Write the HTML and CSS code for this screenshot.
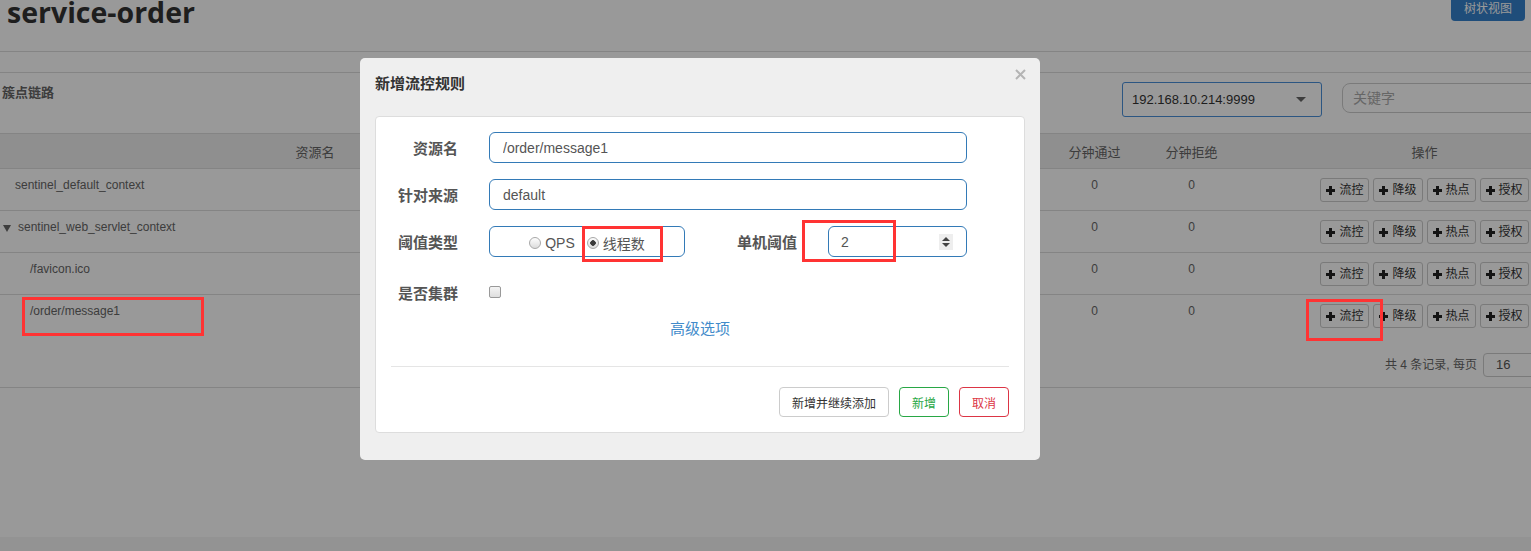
FILE: index.html
```html
<!DOCTYPE html>
<html>
<head>
    <meta charset="utf-8">
    <meta name="viewport" content="width=device-width, initial-scale=1">
    <title>service-order</title>
    <link rel="stylesheet" href="styles.css">
</head>
<body>
    <div class="page">
        <div class="page-head">
            <h1 class="app-title">service-order</h1>
            <button class="btn-tree">树状视图</button>
        </div>
        <div class="sub-bar"></div>
        <div class="toolbar">
            <span class="toolbar-title">簇点链路</span>
            <div class="toolbar-right">
                <div class="machine-select">
                    <span>192.168.10.214:9999</span>
                    <span class="caret"></span>
                </div>
                <input class="search-input" type="text" placeholder="关键字">
            </div>
        </div>
        <table class="res-table">
            <colgroup>
                <col style="width: 630px">
                <col style="width: 104px">
                <col style="width: 104px">
                <col style="width: 104px">
                <col style="width: 104px">
                <col style="width: 97px">
                <col style="width: 97px">
                <col style="width: 291px">
            </colgroup>
            <thead>
                <tr>
                    <th>资源名</th>
                    <th>通过QPS</th>
                    <th>拒绝QPS</th>
                    <th>并发数</th>
                    <th>平均RT</th>
                    <th>分钟通过</th>
                    <th>分钟拒绝</th>
                    <th class="col-ops">操作</th>
                </tr>
            </thead>
            <tbody>
                <tr>
                    <td class="res-name lvl-0">sentinel_default_context</td>
                    <td>0</td><td>0</td><td>0</td><td>0</td>
                    <td>0</td><td>0</td>
                    <td class="col-ops">
                        <button class="op-btn"><span class="plus"></span>流控</button><button class="op-btn"><span class="plus"></span>降级</button><button class="op-btn"><span class="plus"></span>热点</button><button class="op-btn"><span class="plus"></span>授权</button>
                    </td>
                </tr>
                <tr>
                    <td class="res-name lvl-tree"><span class="tree-caret"></span>sentinel_web_servlet_context</td>
                    <td>0</td><td>0</td><td>0</td><td>0</td>
                    <td>0</td><td>0</td>
                    <td class="col-ops">
                        <button class="op-btn"><span class="plus"></span>流控</button><button class="op-btn"><span class="plus"></span>降级</button><button class="op-btn"><span class="plus"></span>热点</button><button class="op-btn"><span class="plus"></span>授权</button>
                    </td>
                </tr>
                <tr>
                    <td class="res-name lvl-1">/favicon.ico</td>
                    <td>0</td><td>0</td><td>0</td><td>0</td>
                    <td>0</td><td>0</td>
                    <td class="col-ops">
                        <button class="op-btn"><span class="plus"></span>流控</button><button class="op-btn"><span class="plus"></span>降级</button><button class="op-btn"><span class="plus"></span>热点</button><button class="op-btn"><span class="plus"></span>授权</button>
                    </td>
                </tr>
                <tr>
                    <td class="res-name lvl-1 marked">/order/message1<span class="mark mark-res"></span></td>
                    <td>0</td><td>0</td><td>0</td><td>0</td>
                    <td>0</td><td>0</td>
                    <td class="col-ops">
                        <button class="op-btn"><span class="plus"></span>流控<span class="mark mark-op"></span></button><button class="op-btn"><span class="plus"></span>降级</button><button class="op-btn"><span class="plus"></span>热点</button><button class="op-btn"><span class="plus"></span>授权</button>
                    </td>
                </tr>
            </tbody>
        </table>
        <div class="pager">
            <span class="pager-text">共 4 条记录, 每页</span>
            <input class="page-size" type="text" value="16">
        </div>
    </div>
    <div class="page-foot"></div>

    <div class="mask"></div>

    <div class="dialog">
        <div class="dialog-title">新增流控规则</div>
        <span class="dialog-close" aria-label="关闭">
            <svg width="11" height="11" viewBox="0 0 11 11"><path d="M1 1L10 10M10 1L1 10" stroke="#b4b4b4" stroke-width="2"/></svg>
        </span>
        <div class="dialog-panel">
            <div class="form">
                <div class="form-row">
                    <label class="form-label">资源名</label>
                    <input class="form-input" type="text" value="/order/message1">
                </div>
                <div class="form-row">
                    <label class="form-label">针对来源</label>
                    <input class="form-input" type="text" value="default">
                </div>
                <div class="form-row">
                    <label class="form-label">阈值类型</label>
                    <div class="radio-box">
                        <label class="radio-item"><input type="radio" name="grade">QPS</label>
                        <label class="radio-item"><input type="radio" name="grade" checked>线程数</label>
                        <span class="mark mark-radio"></span>
                    </div>
                    <label class="form-label form-label-wide">单机阈值</label>
                    <div class="num-input">
                        <input type="text" value="2">
                        <span class="spinner"><span class="spin-up"></span><span class="spin-down"></span></span>
                        <span class="mark mark-num"></span>
                    </div>
                </div>
                <div class="form-row form-row-check">
                    <label class="form-label">是否集群</label>
                    <input class="check" type="checkbox">
                </div>
                <a class="adv-link" href="#">高级选项</a>
            </div>
            <div class="dialog-footer">
                <button class="btn btn-default">新增并继续添加</button>
                <button class="btn btn-green">新增</button>
                <button class="btn btn-red">取消</button>
            </div>
        </div>
    </div>
</body>
</html>
```

FILE: styles.css
```css
body {
    margin: 0;
    background: #fff;
    color: #666;
    font-family: "Liberation Sans", "Noto Sans CJK SC", sans-serif;
    font-size: 12px;
    overflow: hidden;
}

.page {
    min-height: 537px;
}

.page-foot {
    height: 40px;
    background: #f5f5f5;
}

/* --- header --- */
.page-head {
    height: 51px;
    border-bottom: 1px solid #ddd;
    display: flex;
    justify-content: space-between;
    align-items: flex-start;
    padding: 0 6px 0 7px;
}

.app-title {
    margin: -3px 0 0 0;
    font-family: "Open Sans", sans-serif;
    font-size: 28.5px;
    line-height: 30px;
    font-weight: bold;
    color: #333;
}

.btn-tree {
    margin-top: -10px;
    height: 31px;
    padding: 0 13px;
    border: none;
    border-radius: 4px;
    background: #3480cb;
    color: #fff;
    font-family: inherit;
    font-size: 12px;
    padding-top: 4px;
}

.sub-bar {
    height: 20px;
    border-bottom: 1px solid #ddd;
}

.toolbar {
    height: 60px;
    border-bottom: 1px solid #ddd;
    display: flex;
    justify-content: space-between;
    align-items: flex-start;
    padding-left: 2px;
}

.toolbar-title {
    margin-top: 11px;
    font-size: 13px;
    line-height: 18px;
    font-weight: bold;
    color: #666;
}

.toolbar-right {
    display: flex;
    align-items: flex-start;
    gap: 20px;
    margin-right: -11px;
    padding-top: 9px;
}

.machine-select {
    width: 200px;
    height: 35px;
    box-sizing: border-box;
    border: 1px solid #4a90d9;
    border-radius: 3px;
    display: flex;
    align-items: center;
    justify-content: space-between;
    padding: 0 15px 0 9px;
    font-size: 13px;
    color: #333;
}

.caret {
    width: 0;
    height: 0;
    border-left: 5px solid transparent;
    border-right: 5px solid transparent;
    border-top: 5px solid #666;
}

.search-input {
    width: 200px;
    height: 30px;
    box-sizing: border-box;
    margin-top: 1px;
    border: 1px solid #ccc;
    border-radius: 8px;
    padding: 0 10px;
    font-family: inherit;
    font-size: 14px;
}

    .search-input::placeholder {
        color: #aaa;
    }

/* --- table --- */
.res-table {
    width: 1531px;
    table-layout: fixed;
    border-collapse: collapse;
}

    .res-table th {
        height: 34px;
        padding: 0;
        background: #eee;
        font-size: 13px;
        font-weight: normal;
        color: #666;
        text-align: center;
    }

    .res-table td {
        height: 42px;
        box-sizing: border-box;
        padding: 7px 0 0 0;
        border-top: 1px solid #ddd;
        vertical-align: top;
        text-align: center;
        line-height: 18px;
        color: #666;
    }

    .res-table .col-ops {
        padding-left: 78px;
    }

    .res-table td.col-ops {
        padding-top: 9px;
        line-height: 0;
    }

    .res-table td.res-name {
        text-align: left;
        position: relative;
    }

.lvl-0 {
    padding-left: 15px !important;
}

.lvl-tree {
    padding-left: 3px !important;
}

.lvl-1 {
    padding-left: 30px !important;
}

.tree-caret {
    display: inline-block;
    width: 0;
    height: 0;
    border-left: 4px solid transparent;
    border-right: 4px solid transparent;
    border-top: 7px solid #666;
    margin-right: 7px;
    vertical-align: -1px;
}

.op-btn {
    position: relative;
    display: inline-flex;
    align-items: center;
    gap: 4px;
    height: 24px;
    padding: 0 5px;
    margin-left: 4px;
    border: 1px solid #ccc;
    border-radius: 3px;
    background: #fff;
    color: #333;
    font-family: inherit;
    font-size: 12px;
    line-height: 1;
    vertical-align: top;
}

    .op-btn:first-child {
        margin-left: 0;
    }

.plus {
    width: 9px;
    height: 9px;
    background:
        linear-gradient(#222, #222) center / 9px 3px no-repeat,
        linear-gradient(#222, #222) center / 3px 9px no-repeat;
}

.pager {
    height: 50px;
    border-bottom: 1px solid #ddd;
    display: flex;
    justify-content: flex-end;
    align-items: flex-start;
    gap: 6px;
    margin-right: -12px;
}

.pager-text {
    margin-top: 19px;
    font-size: 12px;
    line-height: 18px;
    color: #666;
}

.page-size {
    width: 60px;
    height: 24px;
    box-sizing: border-box;
    margin-top: 16px;
    border: 1px solid #ccc;
    border-radius: 4px;
    padding: 0 12px;
    font-family: inherit;
    font-size: 13px;
    color: #555;
}

/* --- red annotation boxes --- */
.mark {
    position: absolute;
    border: 3px solid #ff3333;
    box-sizing: border-box;
    z-index: 30;
    pointer-events: none;
}

.mark-res {
    left: 22px;
    top: 2px;
    width: 182px;
    height: 39px;
}

.mark-op {
    left: -15px;
    top: -6px;
    width: 77px;
    height: 42px;
}

.mark-radio {
    left: 92px;
    top: -1px;
    width: 81px;
    height: 36px;
}

.mark-num {
    left: -27px;
    top: -7px;
    width: 94px;
    height: 42px;
}

/* --- modal --- */
.mask {
    position: fixed;
    inset: 0;
    background: rgba(0, 0, 0, 0.4);
    z-index: 10;
}

.dialog {
    position: fixed;
    left: 360px;
    top: 58px;
    width: 680px;
    box-sizing: border-box;
    padding: 15px 15px 27px 15px;
    background: #efefef;
    border-radius: 5px;
    z-index: 20;
}

.dialog-title {
    font-size: 15px;
    line-height: 22px;
    font-weight: bold;
    color: #333;
    margin-bottom: 21px;
}

.dialog-close {
    position: absolute;
    top: 11px;
    right: 14px;
    width: 11px;
    height: 11px;
}

.dialog-panel {
    background: #fff;
    border: 1px solid #ddd;
    border-radius: 4px;
    padding: 15px 15px 15px 15px;
}

.form {
    display: flex;
    flex-direction: column;
    border-bottom: 1px solid #e5e5e5;
}

.form-row {
    display: flex;
    align-items: center;
    height: 31px;
    margin-bottom: 16px;
}

.form-label {
    width: 67px;
    margin-right: 31px;
    text-align: right;
    font-size: 15px;
    font-weight: bold;
    color: #555;
    white-space: nowrap;
}

.form-label-wide {
    width: 112px;
}

.form-input {
    width: 478px;
    height: 31px;
    box-sizing: border-box;
    border: 1px solid #337ab7;
    border-radius: 6px;
    padding: 0 13px;
    font-family: inherit;
    font-size: 14px;
    color: #555;
}

.radio-box {
    position: relative;
    width: 196px;
    height: 31px;
    box-sizing: border-box;
    border: 1px solid #337ab7;
    border-radius: 6px;
    display: flex;
    align-items: center;
    justify-content: center;
    gap: 12px;
    padding-top: 2px;
}

.radio-item {
    display: flex;
    align-items: center;
    gap: 4px;
    font-size: 14px;
    color: #555;
}

    .radio-item input {
        appearance: none;
        width: 12px;
        height: 12px;
        margin: 0;
        border: 1px solid #a8a8a8;
        border-radius: 50%;
        background: linear-gradient(#fdfdfd, #dcdcdc);
    }

        .radio-item input:checked {
            background: radial-gradient(circle, #3a3a3a 0 2.5px, transparent 3px), linear-gradient(#fdfdfd, #dcdcdc);
        }

.num-input {
    position: relative;
    width: 139px;
    height: 31px;
    box-sizing: border-box;
    border: 1px solid #337ab7;
    border-radius: 6px;
    display: flex;
    align-items: center;
    padding: 0 13px 0 12px;
}

    .num-input input {
        flex: 1;
        min-width: 0;
        border: none;
        padding: 0;
        outline: none;
        font-family: inherit;
        font-size: 14px;
        color: #555;
    }

.spinner {
    width: 14px;
    height: 16px;
    background: #eee;
    display: flex;
    flex-direction: column;
    align-items: center;
    justify-content: center;
    gap: 2px;
}

.spin-up {
    border-left: 4px solid transparent;
    border-right: 4px solid transparent;
    border-bottom: 4px solid #444;
}

.spin-down {
    border-left: 4px solid transparent;
    border-right: 4px solid transparent;
    border-top: 4px solid #444;
}

.form-row-check {
    height: 24px;
    margin-top: 7px;
    margin-bottom: 15px;
}

.check {
    appearance: none;
    width: 12px;
    height: 12px;
    margin: 0;
    border: 1px solid #999;
    border-radius: 2px;
    background: linear-gradient(#f4f4f4, #dedede);
}

.adv-link {
    align-self: center;
    font-size: 15px;
    line-height: 20px;
    color: #428bca;
    text-decoration: none;
    margin-bottom: 27px;
}

.dialog-footer {
    display: flex;
    justify-content: flex-end;
    gap: 10px;
    padding-top: 20px;
}

.btn {
    height: 30px;
    padding: 0 12px;
    border: 1px solid #ccc;
    border-radius: 4px;
    background: #fff;
    font-family: inherit;
    font-size: 12px;
    color: #333;
}

.btn-green {
    border-color: #28a745;
    color: #28a745;
}

.btn-red {
    border-color: #dc3545;
    color: #dc3545;
}
```
